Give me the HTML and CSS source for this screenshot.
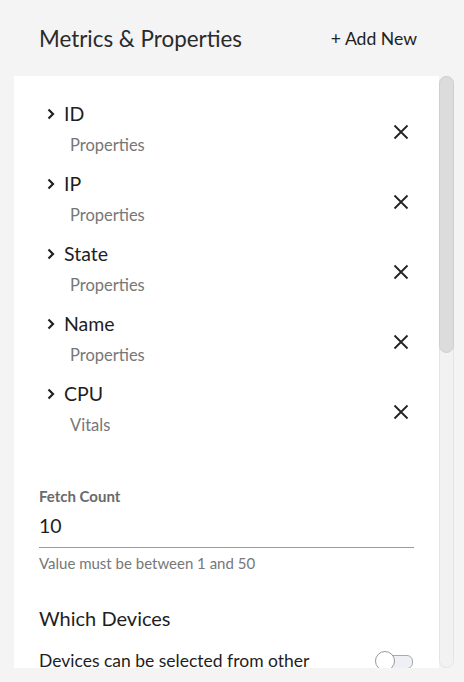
FILE: index.html
```html
<!DOCTYPE html>
<html>
<head>
<meta charset="utf-8">
<link rel="stylesheet" href="styles.css">
</head>
<body>
<div class="app">
  <header class="header">
    <h1 class="title">Metrics &amp; Properties</h1>
    <button class="add-btn">+ Add New</button>
  </header>
  <div class="panel-wrap">
    <div class="panel">
      <ul class="metric-list">
        <li class="metric">
          <div class="metric-text">
            <div class="metric-name"><svg class="chev" viewBox="0 0 8 12"><path d="M1.5 1.5 L6 6 L1.5 10.5" /></svg>ID</div>
            <div class="metric-cat">Properties</div>
          </div>
          <svg class="close" viewBox="0 0 16 16"><path d="M1.5 1.5 L14.5 14.5 M14.5 1.5 L1.5 14.5"/></svg>
        </li>
        <li class="metric">
          <div class="metric-text">
            <div class="metric-name"><svg class="chev" viewBox="0 0 8 12"><path d="M1.5 1.5 L6 6 L1.5 10.5" /></svg>IP</div>
            <div class="metric-cat">Properties</div>
          </div>
          <svg class="close" viewBox="0 0 16 16"><path d="M1.5 1.5 L14.5 14.5 M14.5 1.5 L1.5 14.5"/></svg>
        </li>
        <li class="metric">
          <div class="metric-text">
            <div class="metric-name"><svg class="chev" viewBox="0 0 8 12"><path d="M1.5 1.5 L6 6 L1.5 10.5" /></svg>State</div>
            <div class="metric-cat">Properties</div>
          </div>
          <svg class="close" viewBox="0 0 16 16"><path d="M1.5 1.5 L14.5 14.5 M14.5 1.5 L1.5 14.5"/></svg>
        </li>
        <li class="metric">
          <div class="metric-text">
            <div class="metric-name"><svg class="chev" viewBox="0 0 8 12"><path d="M1.5 1.5 L6 6 L1.5 10.5" /></svg>Name</div>
            <div class="metric-cat">Properties</div>
          </div>
          <svg class="close" viewBox="0 0 16 16"><path d="M1.5 1.5 L14.5 14.5 M14.5 1.5 L1.5 14.5"/></svg>
        </li>
        <li class="metric">
          <div class="metric-text">
            <div class="metric-name"><svg class="chev" viewBox="0 0 8 12"><path d="M1.5 1.5 L6 6 L1.5 10.5" /></svg>CPU</div>
            <div class="metric-cat">Vitals</div>
          </div>
          <svg class="close" viewBox="0 0 16 16"><path d="M1.5 1.5 L14.5 14.5 M14.5 1.5 L1.5 14.5"/></svg>
        </li>
      </ul>
      <div class="field">
        <label class="field-label">Fetch Count</label>
        <div class="field-input">10</div>
        <div class="field-help">Value must be between 1 and 50</div>
      </div>
      <h2 class="section-title">Which Devices</h2>
      <div class="toggle-row">
        <span class="toggle-text">Devices can be selected from other</span>
        <span class="toggle"><span class="knob"></span></span>
      </div>
    </div>
    <div class="scrollbar"><div class="thumb"></div></div>
  </div>
</div>
</body>
</html>
```
FILE: styles.css
```css
* { box-sizing: border-box; }
html, body { margin: 0; padding: 0; }
body {
  background: #f4f4f4;
  font-family: Lato, "Open Sans", sans-serif;
  color: #222;
  width: 464px;
  height: 682px;
  overflow: hidden;
}
.app { padding: 0 10px 0 14px; }
.header {
  display: flex;
  justify-content: space-between;
  align-items: center;
  height: 76px;
  padding: 0 37px 0 25px;
}
.title {
  margin: 0;
  font-size: 22.4px;
  font-weight: 400;
  color: #2a2a2a;
}
.add-btn {
  border: 0;
  background: none;
  padding: 0;
  font-family: inherit;
  font-size: 17.6px;
  color: #222;
}
.panel-wrap {
  display: flex;
  height: 592px;
}
.panel {
  flex: 1;
  background: #fff;
  overflow: hidden;
  padding: 18px 25px 0 25px;
}
.scrollbar {
  width: 15px;
  background: #f2f2f2;
  border: 1px solid #e4e4e4;
  border-radius: 8px;
}
.thumb {
  height: 277px;
  margin: -1px;
  background: #dcdcdc;
  border: 1px solid #cfcfcf;
  border-radius: 8px;
}
.metric-list { list-style: none; margin: 0; padding: 0; }
.metric {
  display: flex;
  align-items: center;
  justify-content: space-between;
  height: 70px;
  padding: 0 5px 0 8px;
}
.metric-text { display: flex; flex-direction: column; }
.metric-name {
  display: flex;
  align-items: center;
  font-size: 19.5px;
  line-height: 24px;
  color: #1e1e1e;
}
.chev {
  width: 8px;
  height: 12px;
  margin-right: 9px;
  fill: none;
  stroke: #222;
  stroke-width: 2.2;
}
.metric-cat {
  font-size: 16.5px;
  line-height: 22px;
  margin-top: 8px;
  padding-left: 23px;
  color: #777;
}
.close {
  width: 16px;
  height: 16px;
  margin-top: 6px;
  fill: none;
  stroke: #222;
  stroke-width: 1.8;
}
.field { margin-top: 43px; }
.field-label {
  display: block;
  font-size: 15px;
  font-weight: 700;
  color: #6a6a6a;
  line-height: 18px;
}
.field-input {
  font-size: 19.5px;
  line-height: 26px;
  padding: 8px 0 8px;
  border-bottom: 1.5px solid #9a9a9a;
  color: #1e1e1e;
}
.field-help {
  font-size: 15px;
  color: #777;
  margin-top: 6px;
  line-height: 18px;
}
.section-title {
  margin: 33px 0 0;
  font-size: 20px;
  font-weight: 400;
  color: #1e1e1e;
  line-height: 26px;
}
.toggle-row {
  display: flex;
  justify-content: space-between;
  align-items: center;
  margin-top: 19px;
}
.toggle-text { font-size: 17.5px; color: #1e1e1e; line-height: 22px; }
.toggle {
  position: relative;
  width: 38px;
  height: 20px;
  display: inline-block;
  margin-right: 1px;
}
.toggle::before {
  content: "";
  position: absolute;
  left: 8px; right: 0; top: 4px; height: 12px;
  background: #eef0f6;
  border: 1px solid #aaa;
  border-radius: 6px;
}
.knob {
  position: absolute;
  left: 0; top: 0;
  width: 20px; height: 20px;
  border-radius: 50%;
  background: #fff;
  border: 1px solid #999;
}
```
